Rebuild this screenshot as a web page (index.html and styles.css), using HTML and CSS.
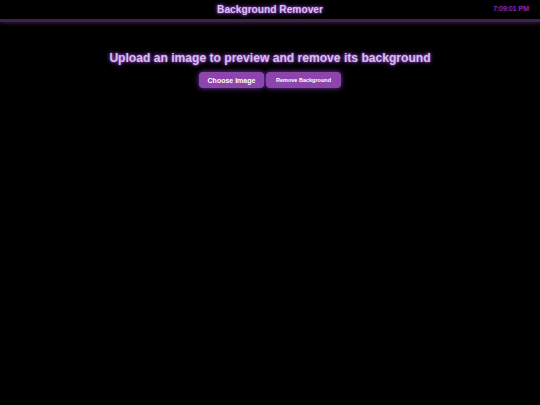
FILE: index.html
```html
<!DOCTYPE html>
<html>
<head>
<meta charset="utf-8">
<link rel="stylesheet" href="styles.css">
</head>
<body>
<header class="topbar">
  <h1 class="title">Background Remover</h1>
  <span class="clock">7:09:01 PM</span>
</header>
<main class="content">
  <h2 class="prompt">Upload an image to preview and remove its background</h2>
  <div class="actions">
    <button class="btn btn-choose">Choose Image</button>
    <button class="btn btn-remove">Remove Background</button>
  </div>
</main>
</body>
</html>
```
FILE: styles.css
```css
html, body {
  margin: 0;
  padding: 0;
  background: #000;
  width: 540px;
  height: 405px;
  overflow: hidden;
  font-family: "Liberation Sans", Arial, sans-serif;
}
.topbar {
  position: relative;
  height: 19px;
  display: flex;
  align-items: center;
  justify-content: center;
  border-bottom: 3px solid #3b2546;
  box-shadow: 0 1px 4px rgba(120, 60, 150, 0.5);
}
.title {
  margin: 0;
  font-size: 10.2px;
  font-weight: bold;
  color: #d9bfea;
  text-shadow: 0 0 4px #a855f7, 0 0 2px #9b4fc0;
}
.clock {
  position: absolute;
  right: 11px;
  top: 5px;
  font-size: 7px;
  color: #9b30d8;
  text-shadow: 0 0 2px #7a20b0;
}
.content {
  display: flex;
  flex-direction: column;
  align-items: center;
  padding-top: 29px;
}
.prompt {
  margin: 0;
  font-size: 12.1px;
  font-weight: bold;
  color: #d5bde6;
  text-shadow: 0 0 4px #a855f7, 0 0 2px #9b4fc0;
}
.actions {
  display: flex;
  gap: 2px;
  margin-top: 7px;
}
.btn {
  border: none;
  background: #8e44ad;
  color: #fff;
  font-family: "Liberation Sans", Arial, sans-serif;
  font-weight: bold;
  border-radius: 4px;
  height: 16px;
  padding: 0;
  box-shadow: 0 0 5px rgba(168, 85, 247, 0.7);
}
.btn-choose {
  width: 65px;
  font-size: 7px;
}
.btn-remove {
  width: 75px;
  font-size: 5.5px;
}
```
